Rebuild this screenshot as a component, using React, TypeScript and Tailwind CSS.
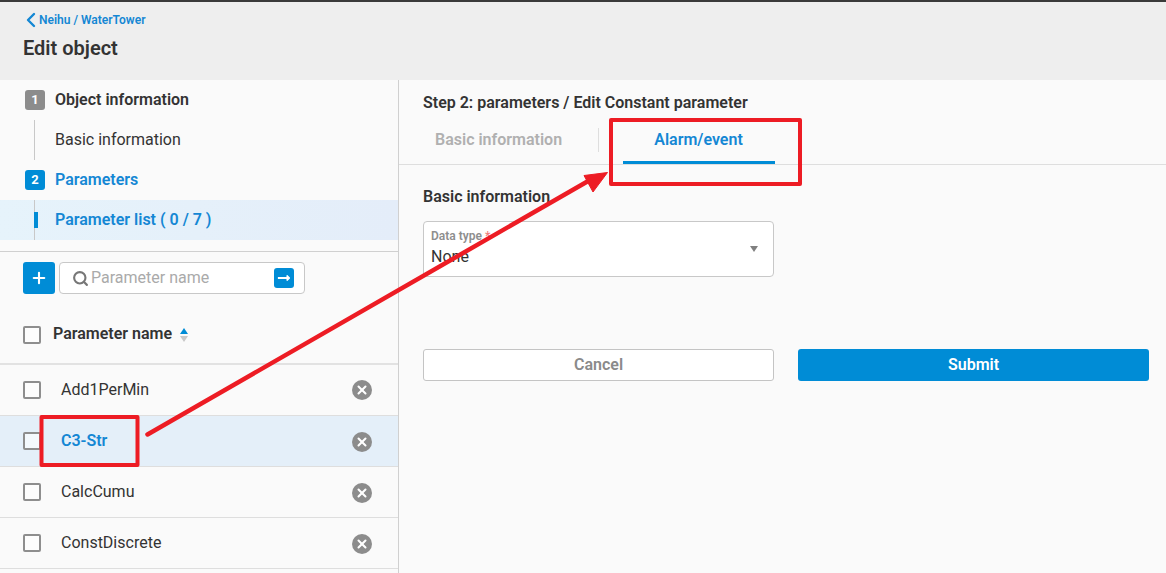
import { ChevronLeft, Plus, Search, X } from "lucide-react";
import { FaLongArrowAltRight } from "react-icons/fa";

const params = [
  { name: "Add1PerMin" },
  { name: "C3-Str", active: true },
  { name: "CalcCumu" },
  { name: "ConstDiscrete" },
];

const Checkbox = () => (
  <span className="block w-[18px] h-[18px] border-2 border-[#8e8e8e] rounded-[2px] bg-white/60 shrink-0" />
);

const App = () => {
  return (
    <div className="relative w-[1166px] h-[573px] overflow-hidden bg-[#fafafa] text-[#333] font-['Roboto',sans-serif]">
      <div className="h-[2px] bg-[#3a3a3a]" />
      <header className="h-[78px] bg-[#eeeeee] pl-[23px] pt-[10px]">
        <a className="flex items-center h-[16px] text-[12px] font-semibold text-[#1487d4]">
          <ChevronLeft className="w-[24px] h-[24px] -ml-[4px] -mr-[4px] shrink-0" strokeWidth={2.4} />
          Neihu / WaterTower
        </a>
        <h1 className="mt-[6px] text-[20px] leading-[28px] font-semibold text-[#333]">Edit object</h1>
      </header>

      <div className="flex h-[493px]">
        <aside className="w-[399px] shrink-0 border-r border-[#d0d0d0] h-full overflow-hidden">
          <div className="h-[40px] flex items-center pl-[25px] gap-[10px]">
            <span className="w-[20px] h-[20px] rounded-[3px] bg-[#8c8c8c] text-white text-[13px] font-bold flex items-center justify-center">1</span>
            <span className="text-[16px] font-semibold">Object information</span>
          </div>
          <div className="h-[40px] flex items-center ml-[34px] pl-[20px] border-l border-[#c8c8c8] text-[16px]">
            Basic information
          </div>
          <div className="h-[40px] flex items-center pl-[25px] gap-[10px]">
            <span className="w-[20px] h-[20px] rounded-[3px] bg-[#008cd6] text-white text-[13px] font-bold flex items-center justify-center">2</span>
            <span className="text-[16px] font-semibold text-[#1487d4]">Parameters</span>
          </div>
          <div className="h-[40px] flex items-center bg-gradient-to-r from-[#e6f3fb] to-[#e4edf9] text-[16px] font-semibold text-[#1487d4]">
            <div className="ml-[34px] h-full flex items-center border-l border-[#c8c8c8]">
              <span className="w-[4px] h-[16px] bg-[#008cd6] -ml-px" />
              <span className="ml-[17px]">Parameter list ( 0 / 7 )</span>
            </div>
          </div>

          <div className="mt-[11px] border-t border-[#d0d0d0] pt-[10px] pl-[23px] flex items-center gap-[4px]">
            <button className="w-[32px] h-[32px] rounded-[3px] bg-[#008cd6] text-white flex items-center justify-center">
              <Plus className="w-[18px] h-[18px]" strokeWidth={2.8} />
            </button>
            <div className="w-[246px] h-[32px] border border-[#c8c8c8] rounded-[4px] bg-white flex items-center pl-[12px] pr-[10px]">
              <Search className="w-[17px] h-[17px] text-[#777]" strokeWidth={3} />
              <span className="ml-[2px] flex-1 text-[16px] text-[#aaaaaa]">Parameter name</span>
              <span className="w-[20px] h-[20px] rounded-[3px] bg-[#008cd6] text-white flex items-center justify-center">
                <FaLongArrowAltRight className="w-[14px] h-[14px]" />
              </span>
            </div>
          </div>

          <div className="h-[71px] flex items-center pl-[23px] pt-[13px] gap-[12px] border-b-2 border-[#e2e2e2]">
            <Checkbox />
            <span className="mb-[2px] text-[16px] font-semibold text-[#333]">Parameter name</span>
            <span className="-ml-[4px] flex flex-col gap-[2px]">
              <span className="w-0 h-0 border-x-[4px] border-x-transparent border-b-[6px] border-b-[#008cd6]" />
              <span className="w-0 h-0 border-x-[4px] border-x-transparent border-t-[6px] border-t-[#c8c8c8]" />
            </span>
          </div>

          {params.map((p, i) => (
            <div
              key={p.name}
              className={`h-[51px] flex items-center pl-[23px] pr-[26px] border-b border-[#dedede] ${p.active ? "bg-[#e4eff9]" : ""}`}
            >
              <Checkbox />
              <span className={`ml-[20px] flex-1 text-[16px] ${p.active ? "font-semibold text-[#1487d4]" : ""}`}>{p.name}</span>
              <span className={`w-[20px] h-[20px] rounded-full bg-[#8c8c8c] text-white flex items-center justify-center ${i > 0 ? "mt-[2px]" : ""}`}>
                <X className="w-[14px] h-[14px]" strokeWidth={3.5} />
              </span>
            </div>
          ))}
        </aside>

        <main className="flex-1 min-w-0">
          <h2 className="pl-[24px] pt-[14px] text-[16px] leading-[18px] font-semibold">Step 2: parameters / Edit Constant parameter</h2>
          <div className="h-[53px] border-b border-[#dedede] pl-[24px] flex items-start">
            <div className="w-[176px] h-[24px] mt-[16px] border-r border-[#dedede] pl-[12px] text-[16px] leading-[24px] font-semibold text-[#b0b0b0]">
              Basic information
            </div>
            <div className="ml-[24px] w-[152px] h-[52px] pt-[16px] pr-[1px] border-b-[3px] border-[#008cd6] text-center text-[16px] leading-[24px] font-semibold text-[#1487d4]">
              Alarm/event
            </div>
          </div>

          <div className="pl-[24px] pr-[17px]">
            <h3 className="mt-[22px] text-[16px] leading-[20px] font-semibold">Basic information</h3>
            <div className="mt-[14px] w-[351px] h-[56px] border border-[#c8c8c8] rounded-[4px] bg-white relative pl-[7px] pt-[7px]">
              <div className="text-[12px] leading-[14px] font-semibold text-[#8e8e8e]">
                Data type <span className="text-[#f08080]">*</span>
              </div>
              <div className="text-[16px] leading-[20px] mt-[4px]">None</div>
              <span className="absolute right-[15px] top-[24px] w-0 h-0 border-x-[4px] border-x-transparent border-t-[6px] border-t-[#808080]" />
            </div>
            <div className="mt-[72px] flex gap-[24px]">
              <button className="w-[351px] h-[32px] border border-[#c4c4c4] rounded-[3px] bg-white text-[16px] font-semibold text-[#8a8a8a]">Cancel</button>
              <button className="w-[351px] h-[32px] rounded-[3px] bg-[#008cd6] text-[16px] font-semibold text-white">Submit</button>
            </div>
          </div>
        </main>
      </div>

      <svg className="absolute inset-0 pointer-events-none" width="1166" height="573" viewBox="0 0 1166 573" fill="none">
        <rect x="41.5" y="417" width="96" height="48" stroke="#ed1c24" strokeWidth="4" strokeLinejoin="round" />
        <rect x="611" y="120" width="189" height="64" stroke="#ed1c24" strokeWidth="4" strokeLinejoin="round" />
        <path d="M147.5 434.5 L590 180" stroke="#ed1c24" strokeWidth="4.5" strokeLinecap="round" />
        <path d="M607.5 172.5 L584 175.5 L593 192 Z" fill="#ed1c24" stroke="#ed1c24" strokeWidth="1" strokeLinejoin="round" />
      </svg>
    </div>
  );
};

export default App;
